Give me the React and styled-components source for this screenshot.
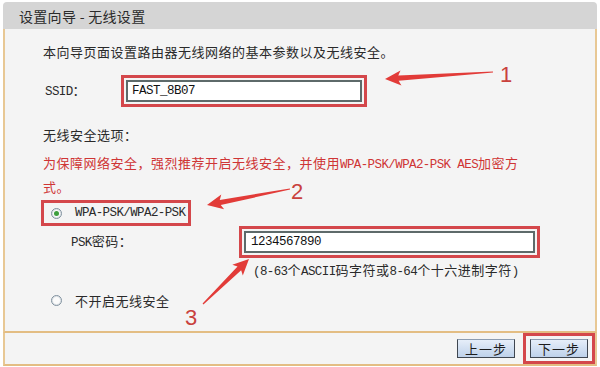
import React from "react";
import styled, { createGlobalStyle } from "styled-components";

const GlobalStyle = createGlobalStyle`
  html, body { margin: 0; padding: 0; background: #fff; }
  body { font-family: "Noto Sans CJK SC", "Liberation Sans", sans-serif; }
`;

const Page = styled.div`
  position: relative;
  width: 600px;
  height: 367px;
  overflow: hidden;
  background: #fff;
  padding: 2px 3px 0 3px;
  box-sizing: border-box;
`;

const TitleBar = styled.div`
  height: 27px;
  background: #d5d5d5;
  border-radius: 4px 4px 0 0;
  padding-left: 16px;
  display: flex;
  align-items: center;
  font-size: 14px;
  color: #2b2b2b;
  letter-spacing: 0.3px;
`;

const Panel = styled.div`
  height: 304px;
  box-sizing: border-box;
  background: #f4f4f4;
  border-left: 2px solid #e8c894;
  border-right: 2px solid #e8c894;
  border-bottom: 2px solid #e3bd83;
  padding: 14px 0 0 38px;
  font-size: 13px;
  letter-spacing: 0.5px;
  color: #2a2a2a;
`;

const Lat = styled.span`
  font-family: "Liberation Mono", monospace;
  font-size: 12.5px;
  letter-spacing: -0.6px;
`;

const Line = styled.div`
  line-height: 18px;
  margin-top: ${(p) => p.$top || 0}px;
`;

const Warning = styled.p`
  margin: 8px 0 0;
  line-height: 21px;
  color: #cf3535;
`;

const Field = styled.div`
  display: flex;
  align-items: center;
  margin-top: ${(p) => p.$top || 0}px;
`;

const FieldLabel = styled.span`
  box-sizing: border-box;
  flex-shrink: 0;
  width: ${(p) => p.$w}px;
  padding-left: ${(p) => p.$indent}px;
  line-height: 18px;
`;

const Mark = styled.div`
  display: inline-flex;
  align-items: center;
  border: 3px solid ${(p) => (p.$on === false ? "transparent" : "#d4474b")};
  padding: ${(p) => p.$pad || "2px"};
`;

const TextInput = styled.input`
  box-sizing: border-box;
  width: ${(p) => p.$w}px;
  height: 22px;
  margin: 0;
  border: 2px solid #5e6a6a;
  background: #fff;
  padding: 0 ${(p) => p.$padX || 4}px;
  font-family: "Liberation Mono", monospace;
  font-size: 12.5px;
  letter-spacing: -0.5px;
  color: #111;
  outline: none;
`;

const Option = styled.div`
  margin: ${(p) => p.$top || 0}px 0 0 -2px;
`;

const RadioRow = styled.label`
  display: flex;
  align-items: center;
  gap: 13px;
  height: 20px;
  padding: 0 3px 0 7px;
`;

const Radio = styled.span`
  box-sizing: border-box;
  width: 11px;
  height: 11px;
  border-radius: 50%;
  border: 1px solid #7f909e;
  box-shadow: inset 0 0 0 1px #dde2e6;
  background: #fbfbfb;
  display: flex;
  align-items: center;
  justify-content: center;

  &::after {
    content: "";
    width: 5px;
    height: 5px;
    border-radius: 50%;
    background: ${(p) => (p.$checked ? "#3d9e3d" : "transparent")};
  }
`;

const Hint = styled.div`
  margin-top: 4px;
  padding-left: 210px;
  line-height: 16px;
`;

const Footer = styled.div`
  height: 33px;
  box-sizing: border-box;
  background: #f4f4f4;
  border-left: 2px solid #e8c894;
  border-right: 2px solid #e8c894;
  border-bottom: 2px solid #e3bd83;
  display: flex;
  justify-content: flex-end;
  align-items: stretch;
  gap: 8px;
`;

const StepButton = styled.button`
  align-self: center;
  box-sizing: border-box;
  width: 58px;
  height: 19px;
  margin: 0;
  padding: 0;
  border: 1px solid #3f4650;
  border-top-color: #8c9cb0;
  background: linear-gradient(#e6eef9, #bed1ea);
  font-family: "Noto Sans CJK SC", sans-serif;
  font-size: 13px;
  letter-spacing: 1px;
  line-height: 17px;
  color: #1c1c1c;
`;

const Overlay = styled.svg`
  position: absolute;
  left: 0;
  top: 0;
  pointer-events: none;
`;

const Num = styled.span`
  position: absolute;
  left: ${(p) => p.$x}px;
  top: ${(p) => p.$y}px;
  font-family: "Liberation Sans", sans-serif;
  font-size: 22px;
  line-height: 22px;
  color: #c9413d;
`;

const Arrow = ({ tip, tail }) => {
  const dx = tail[0] - tip[0];
  const dy = tail[1] - tip[1];
  const len = Math.hypot(dx, dy);
  const angle = (Math.atan2(dy, dx) * 180) / Math.PI;
  const pts = `0,0 16,-7.5 13.5,-2.6 ${len},-0.6 ${len},0.6 13.5,2.6 16,7.5`;
  return (
    <polygon
      points={pts}
      fill="#e23b38"
      transform={`translate(${tip[0]} ${tip[1]}) rotate(${angle})`}
    />
  );
};

export default function App() {
  return (
    <Page>
      <GlobalStyle />
      <TitleBar>设置向导 - 无线设置</TitleBar>
      <Panel>
        <Line>本向导页面设置路由器无线网络的基本参数以及无线安全。</Line>
        <Field $top={14}>
          <FieldLabel $w={78} $indent={2}>
            <Lat>SSID</Lat>：
          </FieldLabel>
          <Mark>
            <TextInput $w={236} readOnly value="FAST_8B07" />
          </Mark>
        </Field>
        <Line $top={19}>无线安全选项：</Line>
        <Warning>
          为保障网络安全，强烈推荐开启无线安全，并使用<Lat>WPA-PSK/WPA2-PSK AES</Lat>加密方
          <br />
          式。
        </Warning>
        <Option $top={3}>
          <Mark $pad="0">
            <RadioRow>
              <Radio $checked />
              <Lat>WPA-PSK/WPA2-PSK</Lat>
            </RadioRow>
          </Mark>
        </Option>
        <Field>
          <FieldLabel $w={196} $indent={28}>
            <Lat>PSK</Lat>密码：
          </FieldLabel>
          <Mark>
            <TextInput $w={291} $padX={5} readOnly value="1234567890" />
          </Mark>
        </Field>
        <Hint>
          <Lat>(8-63</Lat>个<Lat>ASCII</Lat>码字符或<Lat>8-64</Lat>个十六进制字符<Lat>)</Lat>
        </Hint>
        <Option $top={7}>
          <Mark $on={false} $pad="0">
            <RadioRow>
              <Radio />
              不开启无线安全
            </RadioRow>
          </Mark>
        </Option>
      </Panel>
      <Footer>
        <StepButton>上一步</StepButton>
        <Mark $pad="0 4px">
          <StepButton>下一步</StepButton>
        </Mark>
      </Footer>

      <Overlay width="600" height="367" viewBox="0 0 600 367">
        <Arrow tip={[385, 79]} tail={[493, 72]} />
        <Arrow tip={[207, 205]} tail={[290, 189]} />
        <Arrow tip={[249, 259]} tail={[203, 304]} />
      </Overlay>
      <Num $x={500} $y={64}>1</Num>
      <Num $x={291} $y={181}>2</Num>
      <Num $x={185} $y={307}>3</Num>
    </Page>
  );
}
